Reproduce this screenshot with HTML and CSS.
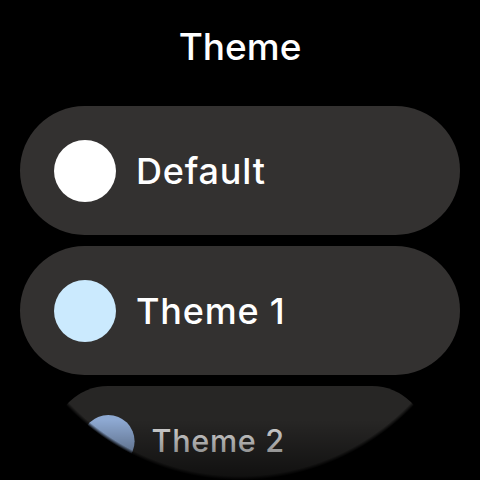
FILE: index.html
```html
<!DOCTYPE html>
<html>
<head>
<meta charset="utf-8">
<link rel="stylesheet" href="styles.css">
</head>
<body>
<div class="screen">
  <h1 class="title">Theme</h1>
  <div class="list">
    <div class="chip">
      <span class="swatch swatch-default"></span>
      <span class="label">Default</span>
    </div>
    <div class="chip">
      <span class="swatch swatch-1"></span>
      <span class="label">Theme 1</span>
    </div>
    <div class="chip chip-far">
      <span class="swatch swatch-2"></span>
      <span class="label">Theme 2</span>
    </div>
  </div>
  <div class="vignette"></div>
  <div class="round-mask"></div>
</div>
</body>
</html>
```

FILE: styles.css
```css
html, body {
  margin: 0;
  padding: 0;
  background: #000;
}

.screen {
  position: relative;
  width: 480px;
  height: 480px;
  overflow: hidden;
  background: #000;
  font-family: Inter, "Noto Sans", sans-serif;
  color: #fff;
}

.title {
  margin: 0;
  padding-top: 28px;
  margin-bottom: 40px;
  font-size: 37px;
  line-height: 38px;
  font-weight: 500;
  text-align: center;
  letter-spacing: 0;
}

.list {
  display: flex;
  flex-direction: column;
  gap: 11px;
  padding: 0 20px;
}

.chip {
  display: flex;
  align-items: center;
  gap: 20px;
  height: 129px;
  flex: 0 0 auto;
  box-sizing: border-box;
  padding-left: 34px;
  border-radius: 65px;
  background: #333130;
}

.swatch {
  width: 62px;
  height: 62px;
  border-radius: 50%;
  flex: 0 0 auto;
}

.swatch-default { background: #ffffff; }
.swatch-1 { background: #cbeafe; }
.swatch-2 { background: #8ea9d2; }

.label {
  font-size: 36px;
  line-height: 36px;
  font-weight: 500;
  letter-spacing: 0.8px;
}

.chip-far {
  transform: scale(0.85);
  transform-origin: 50% 0;
  background: #272625;
}

.chip-far .label {
  color: #dadada;
}

.vignette {
  position: absolute;
  left: 0;
  right: 0;
  bottom: 0;
  height: 60px;
  background: linear-gradient(to bottom, rgba(0,0,0,0) 0%, rgba(0,0,0,0.6) 100%);
  pointer-events: none;
}

.round-mask {
  position: absolute;
  inset: 0;
  background: radial-gradient(circle 240px at 240px 240px, rgba(0,0,0,0) 236px, #000 240px);
  pointer-events: none;
}
```
